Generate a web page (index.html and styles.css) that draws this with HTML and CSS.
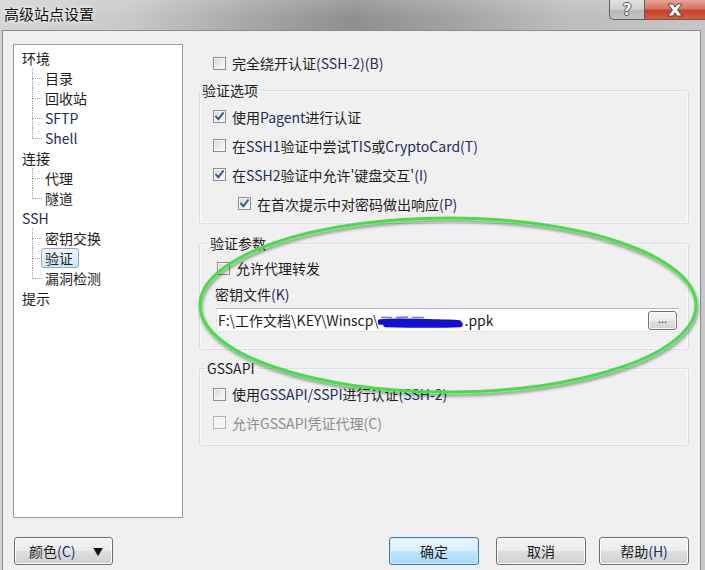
FILE: index.html
```html
<!DOCTYPE html>
<html lang="zh-CN">
<head>
<meta charset="utf-8">
<title>高级站点设置</title>
<link rel="stylesheet" href="styles.css">
</head>
<body>
<div class="window">
  <div class="titlebar">
    <div class="title">高级站点设置</div>
    <div class="caption">
      <div class="cap-btn help">?</div>
      <div class="cap-btn close">
        <svg width="22" height="14" viewBox="0 0 22 14"><path d="M4 1 H9 L11 4.2 L13 1 H18 L13.6 7 L18 13 H13 L11 9.8 L9 13 H4 L8.4 7 Z" fill="#fff" stroke="#4a4a4a" stroke-width="1"/></svg>
      </div>
    </div>
  </div>
  <div class="client">
    <div class="main">
      <div class="tree">
        <div class="node">环境</div>
        <div class="children">
          <div class="leaf">目录</div>
          <div class="leaf">回收站</div>
          <div class="leaf lat">SFTP</div>
          <div class="leaf lat">Shell</div>
        </div>
        <div class="node">连接</div>
        <div class="children">
          <div class="leaf">代理</div>
          <div class="leaf">隧道</div>
        </div>
        <div class="node lat">SSH</div>
        <div class="children">
          <div class="leaf">密钥交换</div>
          <div class="leaf"><span class="selected">验证</span></div>
          <div class="leaf">漏洞检测</div>
        </div>
        <div class="node">提示</div>
      </div>
      <div class="panel">
        <div class="check top-row"><span class="box"></span><span>完全绕开认证<span class="lat">(SSH-2)(B)</span></span></div>
        <fieldset class="group g1">
          <legend>验证选项</legend>
          <div class="group-body">
            <div class="check"><span class="box"><svg class="tick" width="9" height="9" viewBox="0 0 9 9"><path d="M1 4.6 L3.4 7.2 L8 1.2"/></svg></span><span>使用<span class="lat">Pagent</span>进行认证</span></div>
            <div class="check"><span class="box"></span><span>在<span class="lat">SSH1</span>验证中尝试<span class="lat">TIS</span>或<span class="lat">CryptoCard(T)</span></span></div>
            <div class="check"><span class="box"><svg class="tick" width="9" height="9" viewBox="0 0 9 9"><path d="M1 4.6 L3.4 7.2 L8 1.2"/></svg></span><span>在<span class="lat">SSH2</span>验证中允许'键盘交互'<span class="lat">(I)</span></span></div>
            <div class="check indent"><span class="box"><svg class="tick" width="9" height="9" viewBox="0 0 9 9"><path d="M1 4.6 L3.4 7.2 L8 1.2"/></svg></span><span>在首次提示中对密码做出响应<span class="lat">(P)</span></span></div>
          </div>
        </fieldset>
        <fieldset class="group g2">
          <legend>验证参数</legend>
          <div class="group-body">
            <div class="check"><span class="box"></span><span>允许代理转发</span></div>
            <div class="field-label">密钥文件<span class="lat">(K)</span></div>
            <div class="filefield">
              <span class="filetext">F:\工作文档\KEY\Winscp\<svg class="redact" width="86" height="16" viewBox="0 0 86 16"><path d="M3 4.5 L14 4.5 M18 4.5 L30 4 M34 4.5 L46 4.5" stroke="#6b74f2" stroke-width="1.5" fill="none"/><path d="M2 9 C20 7.5 40 8.5 60 9 C70 9.5 76 9 81 10 M8 11.5 C30 12 55 12.5 82 11.5" stroke="#0f0fd6" stroke-width="5.5" fill="none" stroke-linecap="round"/></svg>.ppk</span>
              <span class="browse">...</span>
            </div>
          </div>
        </fieldset>
        <fieldset class="group g3">
          <legend>GSSAPI</legend>
          <div class="group-body">
            <div class="check"><span class="box"></span><span>使用<span class="lat">GSSAPI/SSPI</span>进行认证<span class="lat">(SSH-2)</span></span></div>
            <div class="check disabled"><span class="box"></span><span>允许<span class="lat">GSSAPI</span>凭证代理<span class="lat">(C)</span></span></div>
          </div>
        </fieldset>
      </div>
    </div>
    <div class="footer">
      <div class="btn color-btn"><span>颜色<span class="lat">(C)</span></span><span class="arrow">▼</span></div>
      <div class="btn default ok">确定</div>
      <div class="btn cancel">取消</div>
      <div class="btn help-btn">帮助<span class="lat">(H)</span></div>
    </div>
  </div>
  <svg class="annotation" width="705" height="570" viewBox="0 0 705 570">
    <defs>
      <filter id="sh" x="-5%" y="-10%" width="110%" height="130%">
        <feDropShadow dx="1" dy="3" stdDeviation="1.6" flood-color="#000" flood-opacity="0.4"/>
      </filter>
    </defs>
    <ellipse cx="448" cy="305" rx="248" ry="87" fill="none" stroke="#3ee43e" stroke-width="3" filter="url(#sh)"/>
  </svg>
</div>
</body>
</html>
```
FILE: styles.css
```css
* { box-sizing: border-box; }
html, body { margin: 0; padding: 0; }
body {
  width: 705px;
  height: 570px;
  overflow: hidden;
  font-family: "Noto Sans CJK SC", "Noto Sans", sans-serif;
  font-size: 14px;
  color: #1e1e1e;
  background: #d4d4d4;
}
.window {
  position: relative;
  width: 705px;
  height: 570px;
  display: flex;
  flex-direction: column;
  background: linear-gradient(90deg, #d2d2d2 0%, #c6c6c6 30%, #b4b4b4 60%, #c8c8c8 100%);
}
.titlebar {
  height: 30px;
  flex: none;
  display: flex;
  justify-content: space-between;
  align-items: flex-start;
  background:
    linear-gradient(180deg, rgba(255,255,255,0.15) 0%, rgba(255,255,255,0) 60%),
    linear-gradient(90deg, #d4d4d4 0%, #c9c9c9 18%, #a6a6a6 36%, #8f8f8f 50%, #a2a2a2 64%, #bdbdbd 80%, #c6c6c6 100%);
}
.title {
  font-size: 15px;
  line-height: 28px;
  padding-left: 4px;
  color: #121212;
  text-shadow: 0 0 6px rgba(255,255,255,0.9), 0 0 3px rgba(255,255,255,0.9);
}
.caption { display: flex; }
.cap-btn {
  height: 20px;
  display: flex;
  align-items: center;
  justify-content: center;
  border: 1px solid #5e5e5e;
  border-top: none;
}
.help {
  width: 35px;
  border-right: none;
  border-bottom-left-radius: 5px;
  background: linear-gradient(180deg, #e2e2e2 0%, #cfcfcf 50%, #b8b8b8 51%, #c4c4c4 100%);
  color: #fff;
  font-family: "DejaVu Sans", sans-serif;
  font-weight: bold;
  font-size: 15px;
  text-shadow: -1px 0 #555, 1px 0 #555, 0 -1px #555, 0 1px #555;
}
.close {
  width: 61px;
  border-right: none;
  background: linear-gradient(180deg, #e6a596 0%, #d8735f 45%, #c4412a 55%, #d35d44 100%);
}
.client {
  flex: 1;
  margin: 0 4px 0 2px;
  border: 1px solid #8c8c8c;
  border-bottom: none;
  background: #f0f0f0;
  display: flex;
  flex-direction: column;
}
.main {
  display: flex;
  padding: 13px 0 0 10px;
}
.tree {
  width: 170px;
  height: 474px;
  border: 1px solid #979ca3;
  background: #fff;
  padding: 3px 0 0 8px;
  flex: none;
}
.node, .leaf { height: 20px; line-height: 20px; white-space: nowrap; }
.children { margin-left: 10px; }
.leaf { position: relative; padding-left: 13px; }
.leaf::before {
  content: "";
  position: absolute;
  left: 0; top: 0;
  width: 9px; height: 10px;
  border-left: 1px dotted #a0a0a0;
  border-bottom: 1px dotted #a0a0a0;
}
.leaf:not(:last-child)::after {
  content: "";
  position: absolute;
  left: 0; top: 10px; bottom: 0;
  border-left: 1px dotted #a0a0a0;
}
.selected {
  display: inline-block;
  height: 20px;
  line-height: 18px;
  margin-left: -4px;
  padding: 0 5px 0 3px;
  border: 1px solid #84acdd;
  border-radius: 3px;
  background: linear-gradient(180deg, #f1f7fe 0%, #d2e5fb 100%);
}
.lat { color: #1f2a66; }
.panel {
  margin-left: 16px;
  width: 490px;
  padding-top: 5px;
}
.check {
  display: flex;
  align-items: center;
  height: 29px;
  gap: 6px;
  white-space: nowrap;
}
.top-row { height: 28px; padding-left: 14px; }
.box {
  width: 13px;
  height: 13px;
  flex: none;
  border: 1px solid #8e8f8f;
  background: linear-gradient(135deg, #d3d5d8 0%, #eceef0 55%, #fbfbfb 100%);
  box-shadow: inset 0 0 0 1px #f6f6f6;
  display: flex;
  align-items: center;
  justify-content: center;
}
.tick path { fill: none; stroke: #3b57a0; stroke-width: 2; stroke-linecap: square; }
.disabled { color: #8d8d8d; }
.disabled .lat { color: #8d8d8d; }
.disabled .box { border-color: #b6b6b6; background: #f4f4f4; box-shadow: none; }
.group {
  margin: 0;
  padding: 0;
  width: 490px;
  border: 1px solid #d5dfe5;
  border-radius: 3px;
  box-shadow: inset 0 0 0 1px #fbfbfb;
  min-width: 0;
}
.group legend {
  padding: 0 2px;
  line-height: 16px;
  font-size: 14px;
}
.g1 { margin-top: 5px; }
.g1 legend { margin-left: 0; }
.g1 .group-body { padding: 4px 0 5px 13px; }
.indent { padding-left: 25px; }
.g2 { margin-top: 11px; }
.g2 legend { margin-left: 8px; }
.g2 .group-body { padding: 3px 9px 17px 17px; }
.g2 .check { height: 28px; }
.field-label { height: 24px; line-height: 24px; margin-left: -2px; }
.filefield {
  margin: 2px 0 0 -1px;
  height: 24px;
  display: flex;
  align-items: center;
  background: #fff;
  border: 1px solid #e2e6ea;
  border-top-color: #b9bcc2;
  padding: 0 1px 0 1px;
}
.filetext { display: flex; align-items: center; white-space: nowrap; }
.redact { flex: none; margin-top: 2px; }
.browse {
  margin-left: auto;
  width: 29px;
  height: 19px;
  border: 1px solid #707070;
  border-radius: 3px;
  background: linear-gradient(180deg, #f4f4f4 0%, #ebebeb 50%, #dedede 51%, #d2d2d2 100%);
  box-shadow: inset 0 0 0 1px #fafafa;
  font-size: 11px;
  line-height: 12px;
  color: #2a3a80;
  text-align: center;
  letter-spacing: 0;
}
.g3 { margin-top: 10px; }
.g3 legend { margin-left: 5px; }
.g3 .group-body { padding: 4px 0 8px 13px; }
.g3 .check:first-child { height: 28px; }
.footer {
  display: flex;
  align-items: center;
  padding: 19px 11px 0 11px;
}
.btn {
  height: 28px;
  width: 90px;
  border: 1px solid #707070;
  border-radius: 3px;
  background: linear-gradient(180deg, #f4f4f4 0%, #ececec 48%, #dedede 52%, #d0d0d0 100%);
  box-shadow: inset 0 0 0 1px #fbfbfb;
  display: flex;
  align-items: center;
  justify-content: center;
  white-space: nowrap;
  flex: none;
}
.color-btn {
  width: 99px;
  justify-content: space-between;
  padding: 0 9px 0 14px;
}
.arrow { font-size: 10px; color: #111; }
.ok { margin-left: auto; }
.default {
  border-color: #3c7fb1;
  background: linear-gradient(180deg, #eaf6fd 0%, #d9f0fc 48%, #bee6fd 52%, #a7d9f5 100%);
  box-shadow: inset 0 0 0 1px #c8ebfd;
}
.cancel { margin-left: 17px; }
.help-btn { margin-left: 13px; }
.annotation {
  position: absolute;
  left: 0;
  top: 0;
  pointer-events: none;
}
```
